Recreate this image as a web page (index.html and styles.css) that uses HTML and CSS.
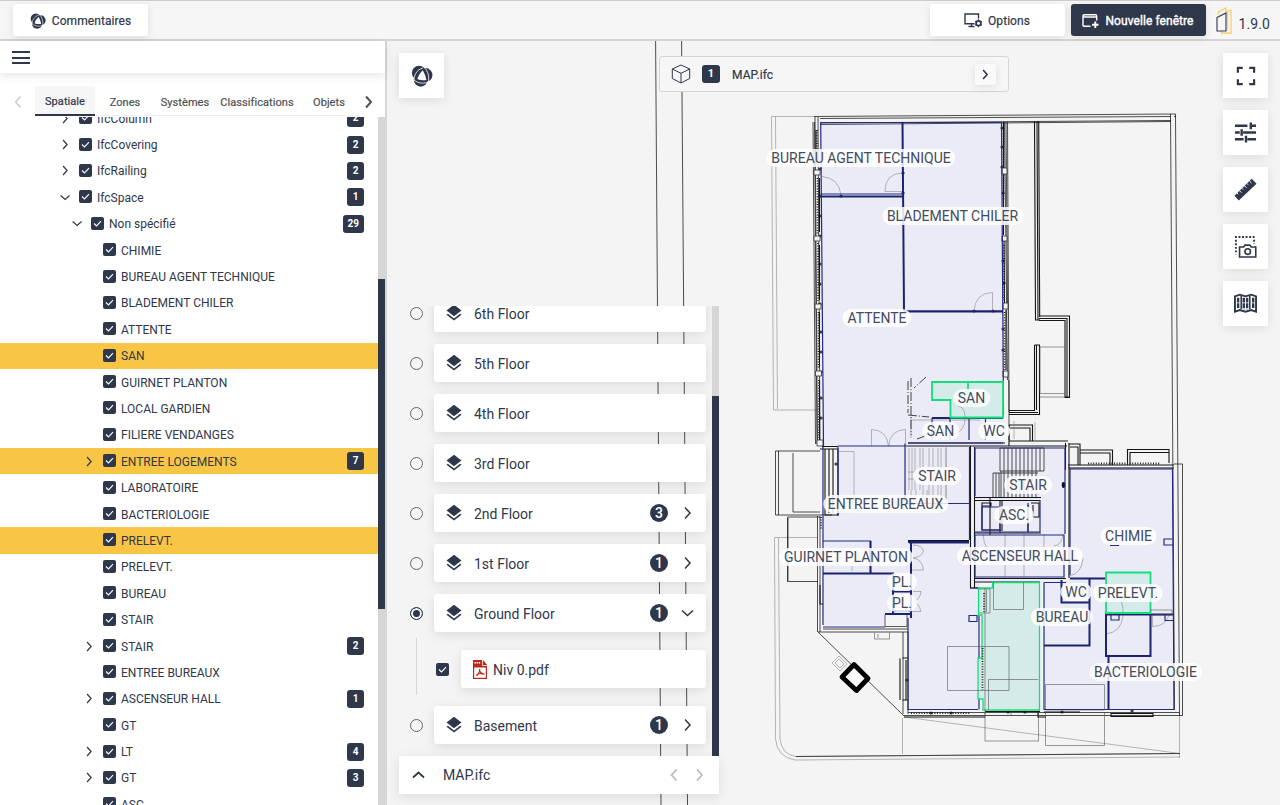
FILE: index.html
```html
<!DOCTYPE html>
<html lang="fr">
<head>
<meta charset="utf-8">
<title>MAP.ifc</title>
<link rel="stylesheet" href="styles.css">
</head>
<body>
<svg class="defs" width="0" height="0">
  <symbol id="logo" viewBox="0 0 24 24">
    <circle cx="8.800" cy="8.600" r="7.800"/><circle cx="15.800" cy="11" r="7.600"/><circle cx="10.600" cy="16" r="7.600"/>
    <path class="cut-fill" d="M12.800 5.800Q15.500 10 16.800 16.300Q11.500 17.200 6.800 15.300Q8.500 9.800 12.800 5.800z"/>
    <path class="cut" d="M3.300 17.500C3 11 6.500 5 13 3.200M14.500 2.800C18.500 6.500 20.300 13 18.800 18.800M20 18C15 20.800 8 20.300 3.500 16.500"/>
  </symbol>
  <symbol id="chev-r" viewBox="0 0 16 16"><path d="M5 2.500 10 8l-5 5.500"/></symbol>
  <symbol id="chev-l" viewBox="0 0 16 16"><path d="M10.500 2.500 5.500 8l5 5.500"/></symbol>
  <symbol id="chev-d" viewBox="0 0 16 16"><path d="M2 5.500 7.500 10.500l5.500-5"/></symbol>
  <symbol id="chev-u" viewBox="0 0 16 16"><path d="M2 10.500 7.500 5.500l5.500 5"/></symbol>
  <symbol id="layers" viewBox="0 0 24 24"><path d="M12 18.540 4.620 12.810 3 14.070l9 7 9-7-1.630-1.270zM12 16l7.360-5.730L21 9l-9-7-9 7 1.630 1.270z"/></symbol>
</svg>

<header class="topbar">
  <button class="btn"><svg class="logo logo-sm"><use href="#logo"/></svg>Commentaires</button>
  <div class="topbar-right">
    <button class="btn"><svg class="ico-opt" viewBox="0 0 18 15"><path d="M10.500 10.700H1V1h13.500v4.500M4.500 13.500h6M7.500 11v2.500" fill="none" stroke="currentColor" stroke-width="1.400"/><path d="M14.500 6.200v8M11.200 8.300l6.600 3.900M17.800 8.300l-6.600 3.900" stroke="currentColor" stroke-width="1.200"/><circle cx="14.500" cy="10.300" r="2.400" fill="#fff" stroke="currentColor" stroke-width="1.800"/></svg>Options</button>
    <button class="btn btn-dark"><svg class="ico-win" viewBox="0 0 17 14"><path d="M8.500 12.300H2.200Q1 12.300 1 11V2Q1 .8 2.200.8h11.300q1.200 0 1.200 1.200v4.500M1 3h13.700" fill="none" stroke="currentColor" stroke-width="1.400"/><path d="M13.300 7.500v6.500M10 10.700h6.500" stroke="currentColor" stroke-width="1.900"/></svg>Nouvelle fenêtre</button>
    <svg class="brand" viewBox="0 0 16 27"><path d="M2.500 7.500V5L10 1v4M10 5l5-1.800V26H5.500v-2M11.500 5v18" fill="none" stroke="#f8cf6c" stroke-width="1.300"/><path d="M1 10.500 10 6v18H1z" fill="none" stroke="#2f374a" stroke-width="1.100"/></svg>
    <span class="version">1.9.0</span>
  </div>
</header>

<div class="main">
  <aside class="side">
    <div class="side-head"><i class="burger"></i></div>
    <nav class="tabs">
      <span class="tab-arrow off"><svg class="chev"><use href="#chev-l"/></svg></span>
      <span class="tab on">Spatiale</span><span class="tab">Zones</span><span class="tab">Systèmes</span><span class="tab wide">Classifications</span><span class="tab">Objets</span>
      <span class="tab-arrow"><svg class="chev bold"><use href="#chev-r"/></svg></span>
    </nav>
    <div class="tree">
      <div class="rows" id="rows"></div>
      <div class="bar"><i class="thumb"></i></div>
    </div>
  </aside>

  <main class="viewer">
    <svg class="plan" viewBox="387 41 893 764">
      <!-- long axis lines -->
      <g class="g"><path d="M655.600 41 661 805M681.600 41 687.500 805"/></g>
      <!-- room surfaces -->
      <path class="room" d="M820.500 122.500H1001.500L1003.500 446H975V540H1069V467H1173L1174.500 709H1044V582H979V709H908V625H823z"/>
      <path class="room" d="M974 447H1067V580H974z"/>
      <path class="blank" d="M908 540h62v3h-62zM970 446h4.500v143H970zM1065.500 447h3.500v20h-3.500zM1065 467h3.500v113H1065zM823 446h16v70h-16zM1039.500 582h3.500v128h-3.500zM885 614h23v13h-23z"/>
      <!-- site outline -->
      <g class="lg">
        <path d="M771.500 116.500H815M771.500 116.500 773.500 410H818M775.500 116.500 777.500 409"/>
        <path d="M774.500 537.500H818M774.500 537.500 775.500 739Q777 757 795 760L1180 757M778.500 538 780 739Q782 755 796 756.500L1180 753.500"/>
        <path d="M902.500 718V754M904 717 1180 753.500M1179.500 716V758"/>
      </g>
      <!-- outer walls -->
      <g class="g">
        <path d="M814 116.500 1175.500 114M820 118.500 1171 116.500M820 124.500 1171 121.500M820 123 1171 120.500M1170.500 114 1174.500 710M1175.500 114 1179.500 716M1174 116.500h2M1182.500 464V715M1174 464h8.500M796 756.500 1180 753.500"/>
        <path d="M813 122 815.500 444M815 117 817.500 444M818 117 820 444M1004.500 122 1007.500 380M1007.500 122 1009 412M1009 380V440"/>
        <path d="M817.500 516V632M820 516V632M818 632H908M823 629H908M818 632 903 715M903 632V714M908 632V714M903 715.500H1183M908 712.500H1180"/>
        <path d="M775.500 451H820M775.500 451V515H832M778.500 451V515M793 453V512H820M787.500 517V581.500H818M787.500 517H820M788 518V581"/>
        <path d="M814.500 122 817 444M1006 122 1007.500 303"/>
      </g>
      <path class="f" d="M985 713V741H1038.500V713M1045.500 713V745.500H1104.500V713M1011 713V715"/>
      <g class="k">
        <path d="M1003.500 122V203M1003.500 175V235M1004 240 1004.500 303M1006 310V370M1034.500 121 1035.500 320M1037 121 1038 320M1038.700 121 1039.700 317M1035 320H1040M1039 316H1069.500V397.500H1065V320.500H1039M1039 318.500H1067V397M1065 397H1069M1034.500 345H1039.500V414.500H1009M1036.500 345V410M1034.500 345V410.500H1009M1009 412.500H1038"/>
        <path d="M1009 425H1032.500V441M1009 428H1030V441M1009 441H1068M1009 425V446M1065.500 443V470M1069 443V470M1069 444H1080V465M1070 447H1078V465H1070M1080 450H1112.500V465M1080 453H1110V465M1127.500 465V449.500H1169V463M1130 465V452.500H1169M1068 465H1174M1068 468H1174"/>
        <path d="M974 446H1067M974 497.500H1041M975 500.500H1040M974.500 447V588M970.500 446V588M908 443H1005M908 446H1005M905 443.500V446M908 540.500H969M822 446.500H838M820 449H838V515H825V449M829 449V513M833 449V513M1044 712H1080M1038 712V717H1046M985 711.500H1040M904 717H985M974 533H1041M974 578.500H1066M1069 470V578M974 582H1040M970 588H979"/>
        <path d="M816 130V165M819.500 178V232M819.500 245V300M819.500 312V367M819.500 380V440M900 658.500V700M906 660V700M902.500 658H908M902.500 700H908M820 585V604H823M1111 713.500H1153V716.500H1111z"/>
        <path d="M990 498V535M1000 501V533M1002 501V531M982 503H991V506H982zM982 506V530H1001M1028 505V532M1031 503H1039V517H1033V505"/>
      </g>
      <path class="f" d="M1040 347H1065M1040 393.500H1065M1040 397H1065M1040 347V393"/>
      <g class="dots"><path d="M817 130V166M817.500 178V234M818 243V301M818.500 312V369M819 380V438M821 517V530M911 713H970M1088 463.500H1160M986 592V608M983 648V690M1003.500 128V200M1004 245V300M1004.500 312V370"/></g>
      <g class="nodes"><path d="M820 169h.1M820 196h.1M820 216h.1M820 236h.1M820 264h.1M820 284h.1M820 304h.1M821 332h.1M821 352h.1M821 372h.1M821 398h.1M821 418h.1M841 196h.1M903 173h.1M903 193h.1M1002 128h.1M1002 147h.1M1002 167h.1M1003 193h.1M1003 240h.1M1003 261h.1M1004 283h.1M1003 329h.1M1003 350h.1M974 311h.1M993 311h.1M836 464h.1M907 680h.1M931 713h.1M951 713h.1M1008 712h.1M1025 712h.1M1062 712h.1M1132 711h.1"/></g>
      <ellipse cx="1063.500" cy="485" rx="1.800" ry="3" fill="#111"/>
      <g class="joint"><path d="M814 170h6v5h-6zM814 236h6v5h-6zM815 304h6v5h-6zM815.500 371h6v5h-6zM1002 168h5v6h-5zM1002 236h5v5h-5zM1003 303h5v6h-5zM1003 371h5v6h-5zM817 440h6v6h-6zM885 614.500h22v12h-22z"/></g>
      <!-- stair flights -->
      <g class="lg"><path d="M909 448V490M912 448V490M915 448V490M920 448V490M923 448V490M929 448V500M933 448V500M938 448V500M941 448V500M946 448V500M908 472H914M908 479H914M911 490V502M916 490V502M923 490V502M927 490V502M946 447V500"/></g>
      <g class="g"><path d="M1000 448H1044V471H1000zM1001 471V497M1004 448V497M1008 448V497M1012 448V497M1016 448V497M1020 448V497M1024 448V497M1028 448V497M1032 448V497M1036 448V497M1040 448V471M993 473H1038M993 473V497M996 473V497M999 473V497"/></g>
      <!-- doors and furniture -->
      <g class="lg">
        <path d="M841 195Q839 178 822 176.500M903 173Q885 173 885 191.500H903M974 311Q975 293 992.500 292.500V311"/>
        <path d="M871.500 446V429.500Q887 430 888.500 446Q890 430 905.500 429.500V446"/>
        <path d="M913 545Q922 545 923.500 551Q922 557 913 558Q922 559 923.500 570H912M913 591.500H921Q920 600 913 601.500Q919 603 921 611.500H912"/>
        <path d="M852 571V565Q854 558 866 557M838 451.500H854V512H838M983 534Q984 552 997 556M1005 534V577M1024 534V577M1044 534V560M1063 534Q1062 545 1054 546M1083 558Q1082 573 1070 576M1123 615Q1122 632 1106 634M1152.500 614V626.500Q1166 626 1169 615"/>
        <path d="M911 420H980M911 417V438M958 406Q965 407 965 418Q965 432 953 434M1014 421V439M1035 422V440"/>
      </g>
      <path class="f" d="M1045.500 684.500H1104.500V710H1045.500zM874.500 632.500V639H889.500V632.500M878 634V638"/>
      <g class="k dash"><path d="M908 381V413M911 378V435M926 377 914 388M908 415 929 417M917 439 925 436"/></g>
      <!-- blue partitions -->
      <g class="b">
        <path d="M820.500 122.500H1001.500M820.700 122 823.500 446M820.500 194H903M904 311H1003M1001.500 122 1003.500 415M838 446H908M823 447V625M905 446V502.500M905 503.500H969M969.500 447V540"/>
        <path d="M838 447V516M823 541H870.500V573.500M823 573.500H893M823 627H885M909 543H969M911 543V617M908 618V709.500H978M970 588H979V709.500M969 615.500H977V621.500H969zM932 418V440M950 418V440M969 418V440M985.500 418V440M932 418H1003M908 443H1003M975 448H1065V534M975 448V496M975 535H1064V577H975zM982 507H1000V530H982zM1028 503V532M1040 500V532M975 532H1040"/>
        <path d="M1069 469H1172.500L1174 709.500H1044V582.500M1044 582.500H1066M1070 469V575M1172 539H1164V545H1173M1110 545.500H1119M1111 615V620H1119V615M1165 615V620.500H1173"/>
      </g>
      <g class="b2"><path d="M902.500 122 904 311M820.500 196.500H903M904 311.500H1003M870.500 541V573.500M823 573.500H893V614M893 591.500H912M893 611H912M911 543V618M1061.500 580V602.500H1089.500M1070 578.500H1106M1089.500 578V645.500H1044M1106 612V656H1150.500V614M1106 614.500H1173M1108.500 656V709M908 542H969M885 614H911M932 418H1003"/></g>
      <!-- selected rooms -->
      <path class="sel" d="M932 382H1003V417.500H950.500V400H932zM968 382V396"/>
      <path class="sel" d="M1106 572.500H1150.500V613H1106z"/>
      <path class="sel thin" d="M992.500 582.500H1039.500V710H983V699H978V658H982V615H978.500V588H992.500z"/>
      <path class="f" d="M947.500 646.500H1009V690.500H947.500zM993.500 582V609.500H1023.500V582M988.500 710V679.500H1038M1150 610H1172V615H1150M985 588V718M979 589H990V613H979M986.500 590V612"/>
      <path class="lg" d="M958 406Q965 407 965 417M1120 600Q1123 603 1123 612"/>
      <path class="dots" d="M984 593V612M982.500 648V690"/>
      <g class="lg"><path d="M832 663 839 656 847 664 840 671zM835 663 839 659 844 664 840 668z"/></g>
      <path class="diamond" d="M854 664.500 868 678.500 856.500 690.500 842 677z"/>
    </svg>
    <div class="labels" id="labels"></div>

    <button class="tool tool-left"><svg class="logo logo-md"><use href="#logo"/></svg></button>

    <div class="modelbar">
      <svg class="cube" viewBox="0 0 20 20"><path d="M10 1 18.700 5v9.500L10 19l-8.700-4.500V5zM1.300 5 10 9.300 18.700 5M10 9.300V19"/></svg>
      <b class="badge">1</b><span class="modelname">MAP.ifc</span>
      <button class="next"><svg class="chev"><use href="#chev-r"/></svg></button>
    </div>

    <div class="tools">
      <button class="tool"><svg viewBox="0 0 24 24"><path d="M4.500 9V4.500H9M15 4.500h4.500V9M19.500 15v4.500H15M9 19.500H4.500V15" fill="none" stroke="currentColor" stroke-width="2"/></svg></button>
      <button class="tool"><svg class="big" viewBox="0 0 24 24"><path d="M1 5h13M16.500 5H23M17.500 1.500v7M1 12h5M9.500 12H23M8 8.500v7M1 19h9M14 19h9M12.500 15.500v7" fill="none" stroke="currentColor" stroke-width="2.500"/></svg></button>
      <button class="tool"><svg class="big" viewBox="0 0 24 24"><path fill="currentColor" d="M.5 18.500 5 23.500 23.500 6 18.500.8z"/><path d="m16 3 2.200 2.200M13.300 5.600l1.500 1.500M10.700 8l2.200 2.200M8 10.600l1.500 1.500M5.500 13l2.200 2.200M3 15.500 4.500 17" stroke="#fff" stroke-width="1"/></svg></button>
      <button class="tool"><svg class="big" viewBox="0 0 24 24"><path d="M1 2h21" stroke="currentColor" stroke-width="2" stroke-dasharray="2 1.700"/><path d="M2 5v15M21 5v4" stroke="currentColor" stroke-width="2" stroke-dasharray="2 1.700"/><path d="M5.800 12.500h4.200l1.500-2h5l1.500 2h4.700V23H5.800z" fill="none" stroke="currentColor" stroke-width="1.700"/><circle cx="14.300" cy="17.300" r="2.900" fill="none" stroke="currentColor" stroke-width="1.700"/></svg></button>
      <button class="tool"><svg class="big" viewBox="0 0 24 24"><path d="M1 4.500l5-1.700 6 1.700 6-1.700 5 1.700v16l-5-1.700-6 1.700-6-1.700-5 1.700z" fill="none" stroke="currentColor" stroke-width="2"/><path d="M7.500 4v14M16.500 4v14" stroke="currentColor" stroke-width="1.600"/><path d="M4.300 6v11.500M10.200 6v12M13.700 6v12M20 6v11.500" stroke="currentColor" stroke-width="2.500" stroke-dasharray="5 .8"/></svg></button>
    </div>

    <section class="levels">
      <div class="level-scroll">
        <div class="level-list">
          <div class="level"><i class="radio"></i><div class="card"><svg class="layers"><use href="#layers"/></svg><span>6th Floor</span></div></div>
          <div class="level"><i class="radio"></i><div class="card"><svg class="layers"><use href="#layers"/></svg><span>5th Floor</span></div></div>
          <div class="level"><i class="radio"></i><div class="card"><svg class="layers"><use href="#layers"/></svg><span>4th Floor</span></div></div>
          <div class="level"><i class="radio"></i><div class="card"><svg class="layers"><use href="#layers"/></svg><span>3rd Floor</span></div></div>
          <div class="level"><i class="radio"></i><div class="card"><svg class="layers"><use href="#layers"/></svg><span>2nd Floor</span><b class="count">3</b><svg class="chev"><use href="#chev-r"/></svg></div></div>
          <div class="level"><i class="radio"></i><div class="card"><svg class="layers"><use href="#layers"/></svg><span>1st Floor</span><b class="count">1</b><svg class="chev"><use href="#chev-r"/></svg></div></div>
          <div class="level"><i class="radio on"></i><div class="card"><svg class="layers"><use href="#layers"/></svg><span>Ground Floor</span><b class="count">1</b><svg class="chev"><use href="#chev-d"/></svg></div></div>
          <div class="sub"><i class="box"><svg viewBox="0 0 13 13"><path d="M3 6.500 5.500 9 10 4.200"/></svg></i>
            <div class="card"><svg class="pdf" viewBox="0 0 14 19"><path d="M0 0h9l5 5v14H0z" fill="#c0271a"/><path d="M10 0v5h4z" fill="#c0271a"/><path d="M9.500 0v5.500H14" fill="none" stroke="#fff" stroke-width=".8"/><path d="M1.200 7.500h11.600v10.300H1.200z" fill="#fff"/><path d="M6.500 9q.8 3-3 7M6.600 10.500q1.400 4 4.900 3.700M3.500 15q3-2 7-1.500" fill="none" stroke="#c0271a" stroke-width="1.200"/><path d="M1.500 2.800h6" stroke="#fff" stroke-width="1.500" stroke-dasharray="1.500 .6"/></svg><span>Niv 0.pdf</span></div></div>
          <div class="level"><i class="radio"></i><div class="card"><svg class="layers"><use href="#layers"/></svg><span>Basement</span><b class="count">1</b><svg class="chev"><use href="#chev-r"/></svg></div></div>
        </div>
        <div class="bar"><i class="thumb"></i></div>
      </div>
      <footer class="level-foot"><svg class="chev"><use href="#chev-u"/></svg><span>MAP.ifc</span><svg class="chev off"><use href="#chev-l"/></svg><svg class="chev off"><use href="#chev-r"/></svg></footer>
    </section>
  </main>
</div>
<script src="app.js"></script>
</body>
</html>
```

FILE: styles.css
```css
* { box-sizing: border-box; }
body { margin: 0; width: 1280px; height: 805px; overflow: hidden; display: flex; flex-direction: column; background: #f4f4f4; color: #2f374a; font: 12px Roboto, sans-serif; }
button { font: inherit; color: inherit; border: 0; padding: 0; background: #fff; }
svg { display: block; flex: none; }
i { font-style: normal; display: block; }
.defs { position: absolute; }

.topbar { flex: none; height: 41px; border-top: 1px solid #cdcdcd; border-bottom: 2px solid #d6d6d6; background: #f6f6f6; display: flex; justify-content: space-between; align-items: flex-start; padding: 3px 10px 0 13px; }
.topbar-right { display: flex; gap: 6px; }
.btn { width: 135px; height: 32px; border-radius: 3px; display: flex; align-items: center; justify-content: center; gap: 6px; letter-spacing: .07px; padding-top: 1px; -webkit-text-stroke: .2px currentColor; box-shadow: 0 2px 8px rgba(0,0,0,.1); }
.btn-dark { background: #2f374a; color: #fff; -webkit-text-stroke-width: .4px; }
.ico-opt { width: 18px; height: 15px; }
.ico-win { width: 17px; height: 14px; }
.brand { width: 16px; height: 27px; margin: 3px 0 0 4px; }
.version { font-size: 14px; margin: 12px 0 0 1px; letter-spacing: .1px; }

.logo { fill: #2f374a; }
.logo-sm { width: 16px; height: 16px; }
.logo-md { width: 22px; height: 22px; }
.cut { fill: none; stroke: #fff; stroke-width: .9; }
.cut-fill { fill: #fff; }

.main { flex: 1; min-height: 0; display: flex; }
.side { width: 387px; border-right: 2px solid #d6d6d6; background: #fff; display: flex; flex-direction: column; }
.side-head { height: 32px; flex: none; padding: 10px 12px; box-shadow: 0 3px 10px rgba(0,0,0,.1); }
.burger { width: 18px; height: 13px; border-top: 2px solid #2f374a; border-bottom: 2px solid #2f374a; display: flex; align-items: center; }
.burger::before { content: ""; width: 18px; height: 2px; background: #2f374a; }
.tabs { flex: none; height: 31px; margin-top: 13px; display: flex; font-size: 11px; letter-spacing: .06px; color: #505050; -webkit-text-stroke: .2px currentColor; position: relative; z-index: 1; }
.tab { width: 60px; height: 30px; display: flex; align-items: center; justify-content: center; padding-top: 4px; border-bottom: 1px solid #eee; }
.tab.wide { width: 84px; }
.tab.on { background: #f6f6f6; color: #2f374a; border-bottom: 2px solid #2f374a; padding-top: 2px; }
.tab-arrow { width: 35px; display: flex; align-items: center; justify-content: center; }
.tab-arrow:last-child { width: 19px; }
.tab-arrow.off { color: #ccc; }
.chev { width: 16px; height: 16px; fill: none; stroke: currentColor; stroke-width: 1.500; }
.chev.bold { stroke-width: 2; }

.tree { flex: 1; min-height: 0; display: flex; overflow: hidden; }
.rows { flex: 1; margin-top: -12px; }
.row { height: 26.400px; display: flex; align-items: center; padding-right: 14px; }
.row.hl { background: #f8c644; }
.row .tw { width: 13px; height: 13px; margin-right: 7px; }
.row .tw.none { visibility: hidden; }
.row span { flex: 1; margin-left: 5px; white-space: nowrap; padding-top: 1px; }
.row .box { margin-top: -1px; }
.box { flex: none; width: 13px; height: 13px; border-radius: 2px; background: #2f374a; }
.box path { fill: none; stroke: #fff; stroke-width: 1.100; }
.badge { min-width: 17px; height: 18px; padding: 0 5px; border-radius: 3px; background: #2f374a; color: #fff; font-size: 10px; font-weight: 700; line-height: 18px; text-align: center; }
.bar { width: 7px; background: #d6d6d6; }
.thumb { background: #2f374a; }
.tree .thumb { height: 330px; margin-top: 162px; }

.viewer { flex: 1; position: relative; overflow: hidden; }
.plan { position: absolute; inset: 0; width: 893px; height: 764px; fill: none; }
.room { fill: #ebebf7; }
.blank { fill: #f4f4f4; }
.g { stroke: #222; stroke-width: .8; fill: none; }
.f { stroke: #555; stroke-width: .6; }
.lg { stroke: #888; stroke-width: .6; }
.k { stroke: #151515; stroke-width: 1.100; }
.dash { stroke-dasharray: 9 2 1 2; stroke-width: .8; }
.dots { stroke: #222; stroke-width: 1.800; stroke-dasharray: 1 1.600; }
.nodes { stroke: #111c; stroke-width: 3.200; stroke-linecap: round; }
.joint { fill: #f4f4f4; stroke: #333; stroke-width: .8; }
.b { stroke: #232b80; stroke-width: 1.200; }
.b2 { stroke: #1b2270; stroke-width: 2; }
.sel { fill: #d5ebe9; stroke: #12df7c; stroke-width: 1.800; }
.sel.thin { stroke-width: 1.300; }
.diamond { stroke: #000; stroke-width: 4.800; stroke-linejoin: round; fill: #f8f8f8; }
.label { position: absolute; transform: translate(-50%, -50%); height: 18px; line-height: 18px; padding: 0 5px; border-radius: 9px; background: rgba(255,255,255,.85); font-size: 14px; color: #434b5c; white-space: nowrap; }

.tool { width: 45px; height: 45px; display: flex; align-items: center; justify-content: center; box-shadow: 0 2px 10px rgba(0,0,0,.1); }
.tool svg { width: 26px; height: 26px; }
.tool svg.big { width: 23px; height: 23px; }
.tool svg.logo { width: 22px; height: 22px; }
.tool-left { position: absolute; left: 12px; top: 12px; }
.tools { position: absolute; right: 12px; top: 12px; display: flex; flex-direction: column; gap: 12px; }
.modelbar { position: absolute; left: 272px; top: 15px; width: 350px; height: 36px; display: flex; align-items: center; padding: 0 12px 0 11px; border: 1px solid #d6d6d6; border-radius: 3px; background: #f6f6f6; }
.cube { width: 20px; height: 20px; fill: none; stroke: #2f374a; stroke-width: 1; }
.modelbar .badge { width: 18px; margin: 0 12px 0 11px; font-size: 11px; }
.modelname { flex: 1; font-size: 12px; letter-spacing: .1px; padding-top: 1px; -webkit-text-stroke: .2px currentColor; }
.next { width: 21px; height: 21px; border-radius: 3px; background: #fafafa; display: flex; align-items: center; justify-content: center; box-shadow: 0 2px 8px rgba(0,0,0,.1); }
.next .chev { width: 13px; height: 13px; stroke-width: 2; }

.levels { position: absolute; left: 12px; top: 265px; width: 320px; height: 488px; display: flex; flex-direction: column; font-size: 14px; }
.level-scroll { height: 450px; display: flex; overflow: hidden; }
.level-list { flex: 1; margin-top: -12px; display: flex; flex-direction: column; gap: 12px; padding: 0 6px 0 11px; }
.level { display: flex; align-items: center; gap: 11px; }
.radio { flex: none; width: 13px; height: 13px; border: 1px solid #666; border-radius: 50%; background: #f6f6f6; }
.radio.on { border-color: #2f374a; background: #2f374a; box-shadow: inset 0 0 0 2px #f6f6f6; }
.card { flex: 1; height: 38px; border-radius: 3px; background: #fff; display: flex; align-items: center; padding: 0 10px; box-shadow: 0 3px 12px rgba(0,0,0,.1); }
.card span { flex: 1; padding-top: 1px; }
.layers { width: 20px; height: 20px; margin-right: 10px; fill: #2f374a; }
.count { width: 18px; height: 18px; margin-right: 12px; border-radius: 50%; background: #2f374a; color: #fff; text-align: center; line-height: 18px; font-weight: 500; }
.sub { margin: -6px 0 -6px 6px; padding-left: 19px; display: flex; align-items: center; gap: 12px; height: 62px; border-style: solid; border-width: 0 0 0 1px; border-image: linear-gradient(transparent 2%, #d6d6d6 2%, #d6d6d6 90%, transparent 90%) 1; }
.pdf { width: 14px; height: 19px; margin: 0 6px 0 2px; }
.levels .thumb { height: 360px; margin-top: 90px; }
.level-foot { height: 38px; background: #fff; display: flex; align-items: center; padding: 0 11px 0 12px; box-shadow: 0 3px 12px rgba(0,0,0,.1); position: relative; }
.level-foot span { flex: 1; margin-left: 16px; }
.level-foot .chev { stroke-width: 1.700; }
.level-foot .off { color: #b9b9b9; margin-left: 10px; }
```

FILE: app.js
```js
// name, indent of the toggle, toggle state, badge, highlighted
const rows = [
  ["IfcColumn", 59, "r", 2], ["IfcCovering", 59, "r", 2], ["IfcRailing", 59, "r", 2],
  ["IfcSpace", 59, "d", 1], ["Non spécifié", 71, "d", 29],
  ["CHIMIE"], ["BUREAU AGENT TECHNIQUE"], ["BLADEMENT CHILER"], ["ATTENTE"],
  ["SAN", 83, "", 0, 1], ["GUIRNET PLANTON"], ["LOCAL GARDIEN"], ["FILIERE VENDANGES"],
  ["ENTREE LOGEMENTS", 83, "r", 7, 1], ["LABORATOIRE"], ["BACTERIOLOGIE"],
  ["PRELEVT.", 83, "", 0, 1], ["PRELEVT."], ["BUREAU"], ["STAIR"], ["STAIR", 83, "r", 2],
  ["ENTREE BUREAUX"], ["ASCENSEUR HALL", 83, "r", 1], ["GT"], ["LT", 83, "r", 4],
  ["GT", 83, "r", 3], ["ASC."]
];
document.getElementById("rows").innerHTML = rows.map(([name, x = 83, t, n, hl]) =>
  `<div class="row${hl ? " hl" : ""}" style="padding-left:${x}px"><svg viewBox="0 0 16 16" class="chev tw${t ? "" : " none"}"><use href="#chev-${t || "r"}"/></svg>` +
  `<i class="box"><svg viewBox="0 0 13 13"><path d="M3 6.500 5.500 9 10 4.200"/></svg></i><span>${name}</span>${n ? `<b class="badge">${n}</b>` : ""}</div>`
).join("");

const labels = [
  ["BUREAU AGENT TECHNIQUE", 861, 158], ["BLADEMENT CHILER", 952.5, 216], ["ATTENTE", 877, 318],
  ["SAN", 971.5, 398], ["SAN", 940.5, 431], ["WC", 994, 431], ["STAIR", 937, 476], ["STAIR", 1028, 485],
  ["ENTREE BUREAUX", 885.5, 504], ["ASC.", 1014, 515], ["CHIMIE", 1128.5, 536],
  ["GUIRNET PLANTON", 846, 557], ["ASCENSEUR HALL", 1020, 556], ["PL.", 902, 582], ["PL.", 902, 603],
  ["WC", 1076, 592], ["PRELEVT.", 1128, 593], ["BUREAU", 1062, 617], ["BACTERIOLOGIE", 1145.5, 672]
];
document.getElementById("labels").innerHTML = labels.map(([t, x, y]) =>
  `<span class="label" style="left:${x - 387}px;top:${y - 41}px">${t}</span>`).join("");
```
